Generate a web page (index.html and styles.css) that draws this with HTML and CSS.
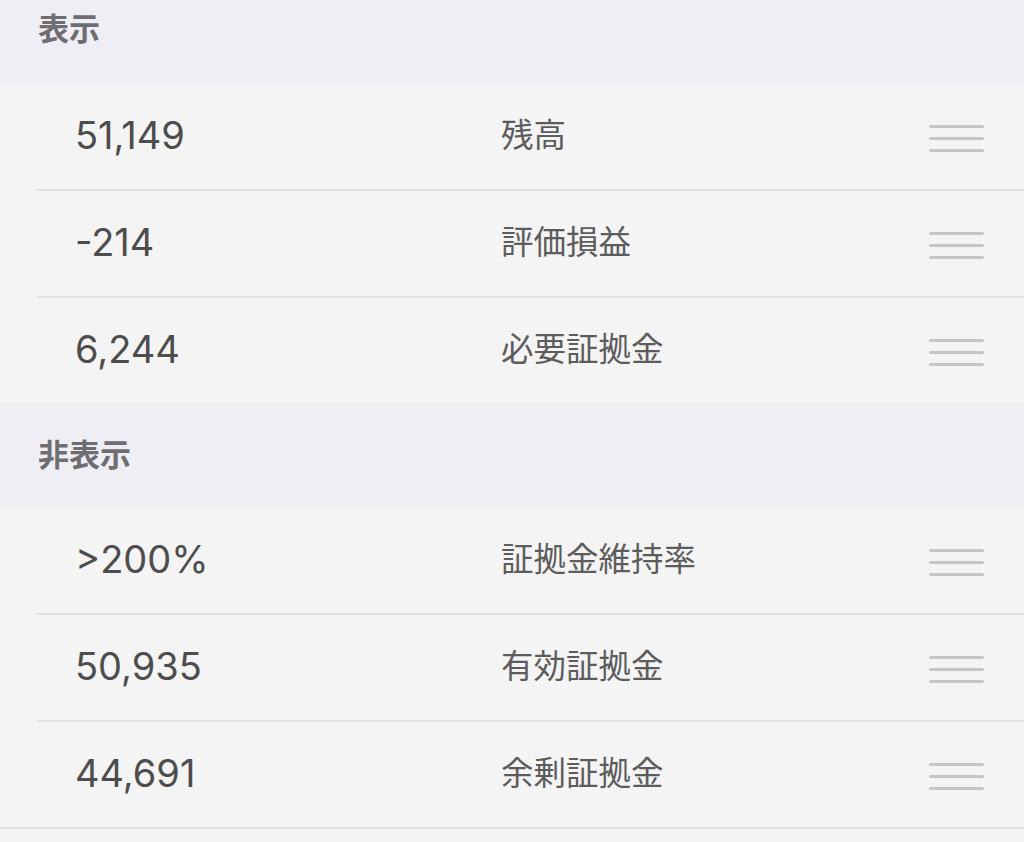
FILE: index.html
```html
<!DOCTYPE html>
<html lang="ja">
<head>
<meta charset="utf-8">
<title>表示設定</title>
<link rel="stylesheet" href="styles.css">
</head>
<body>
<div class="screen">
  <div class="section-header section-header--top"><span>表示</span></div>
  <ul class="list">
    <li class="row"><div class="row-inner"><span class="value">51,149</span><span class="label">残高</span><span class="handle"><i></i><i></i><i></i></span></div></li>
    <li class="row"><div class="row-inner"><span class="value">-214</span><span class="label">評価損益</span><span class="handle"><i></i><i></i><i></i></span></div></li>
    <li class="row"><div class="row-inner"><span class="value">6,244</span><span class="label">必要証拠金</span><span class="handle"><i></i><i></i><i></i></span></div></li>
  </ul>
  <div class="section-header"><span>非表示</span></div>
  <ul class="list list--last">
    <li class="row"><div class="row-inner"><span class="value">&gt;200%</span><span class="label">証拠金維持率</span><span class="handle"><i></i><i></i><i></i></span></div></li>
    <li class="row"><div class="row-inner"><span class="value">50,935</span><span class="label">有効証拠金</span><span class="handle"><i></i><i></i><i></i></span></div></li>
    <li class="row"><div class="row-inner"><span class="value">44,691</span><span class="label">余剰証拠金</span><span class="handle"><i></i><i></i><i></i></span></div></li>
  </ul>
</div>
</body>
</html>
```
FILE: styles.css
```css
html, body {
  margin: 0;
  padding: 0;
  background: #f4f4f4;
}
.screen {
  width: 1024px;
  height: 842px;
  overflow: hidden;
  background: #f4f4f4;
  font-family: "Inter", "Noto Sans CJK JP", sans-serif;
}
.section-header {
  height: 105px;
  box-sizing: border-box;
  background: #efeef4;
  display: flex;
  align-items: center;
  padding-left: 38px;
  padding-bottom: 6px;
  font-family: "Noto Sans CJK JP", sans-serif;
  font-weight: 700;
  font-size: 31px;
  color: #6d6d72;
}
.section-header--top {
  height: 84px;
  padding-bottom: 31px;
}
.list {
  list-style: none;
  margin: 0;
  padding: 0;
  background: #f4f4f4;
}
.list--last {
  border-bottom: 2px solid #dedede;
}
.row {
  padding-left: 37px;
}
.row-inner {
  height: 105px;
  display: flex;
  align-items: center;
  border-bottom: 2px solid #e2e2e2;
}
.row:last-child .row-inner {
  border-bottom: none;
}
.value {
  width: 426px;
  padding-left: 38px;
  font-family: "Inter", sans-serif;
  font-size: 38px;
  color: #4d4d4d;
  margin-top: -3px;
}
.label {
  flex: 1;
  font-family: "Noto Sans CJK JP", sans-serif;
  font-size: 32.5px;
  font-weight: 400;
  color: #5c5c5c;
  margin-top: -8px;
}
.handle {
  width: 55px;
  margin-right: 40px;
  display: flex;
  flex-direction: column;
  gap: 9px;
  margin-top: 4px;
}
.handle i {
  display: block;
  height: 3px;
  border-radius: 2px;
  background: #c5c5c5;
}
```
